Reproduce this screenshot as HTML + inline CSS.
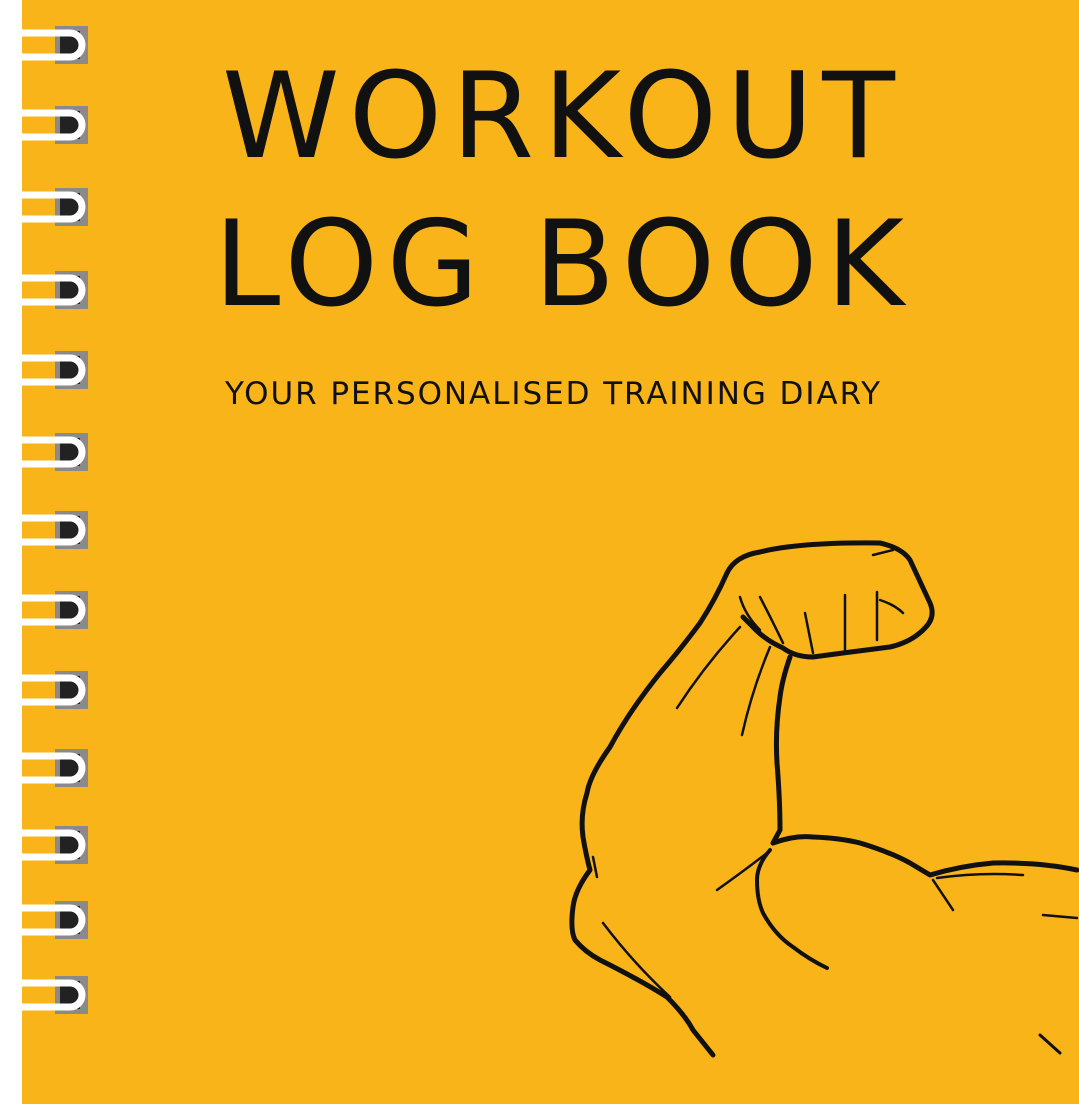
<!DOCTYPE html>
<html><head><meta charset="utf-8"><style>
html,body{margin:0;padding:0;background:#fff;width:1079px;height:1104px;overflow:hidden}
svg{display:block}
</style></head><body>
<svg width="1079" height="1104" viewBox="0 0 1079 1104" xmlns="http://www.w3.org/2000/svg">
<rect x="0" y="0" width="1079" height="1104" fill="#fff"/>
<rect x="22" y="0" width="1057" height="1104" fill="#F9B41A"/>
<g font-family="DejaVu Sans, Liberation Sans, sans-serif" fill="#111">
<text x="222" y="157" font-size="119" textLength="673" lengthAdjust="spacing">WORKOUT</text>
<text x="214" y="305" font-size="119" textLength="690" lengthAdjust="spacing">LOG BOOK</text>
<text x="225" y="404" font-size="31" textLength="655" lengthAdjust="spacing">YOUR PERSONALISED TRAINING DIARY</text>
</g>
<g id="rings">
<g transform="translate(0,45)">
<rect x="55" y="-19" width="33" height="38" fill="#8a8a8a"/>
<rect x="60" y="-14" width="20" height="28" fill="#222"/>
<path d="M0,-12 L70,-12 A12,12 0 0 1 70,12 L0,12" fill="none" stroke="#fff" stroke-width="7"/>
</g>
</g>
<use href="#rings" y="80"/>
<use href="#rings" y="162"/>
<use href="#rings" y="245"/>
<use href="#rings" y="325"/>
<use href="#rings" y="407"/>
<use href="#rings" y="485"/>
<use href="#rings" y="565"/>
<use href="#rings" y="645"/>
<use href="#rings" y="723"/>
<use href="#rings" y="800"/>
<use href="#rings" y="875"/>
<use href="#rings" y="950"/>
<g fill="none" stroke="#111" stroke-linecap="round" stroke-linejoin="round">
<path stroke-width="5" d="M727,573 Q735,556 760,552 Q800,542 880,543 Q902,548 910,560 L930,603 Q936,617 925,628 Q912,642 890,647 L843,653 L813,657 Q795,657 783,648 Q765,640 753,627 L743,617"/>
<path stroke-width="5" d="M727,573 Q715,600 700,623 Q680,650 660,673 Q630,710 610,747 Q590,775 587,793 Q580,815 583,837 Q586,855 590,870 Q575,890 573,907 Q570,930 575,940 Q585,952 600,960 Q640,980 667,997 Q685,1015 693,1030 Q705,1045 713,1055"/>
<path stroke-width="5" d="M790,657 Q782,680 780,697 Q775,730 777,763 Q780,800 780,830 L773,843"/>
<path stroke-width="5" d="M773,843 Q795,835 813,837 Q840,838 860,843 Q890,852 910,863 L930,875 Q960,866 993,863 Q1040,862 1077,870"/>
<path stroke-width="4" d="M770,850 Q757,865 757,880 Q757,900 763,913 Q775,935 793,947 Q810,960 827,968"/>
<path stroke-width="2.5" d="M717,890 Q745,870 767,853"/>
<path stroke-width="2.5" d="M933,880 L953,910"/>
<path stroke-width="2.5" d="M937,878 Q980,872 1023,875"/>
<path stroke-width="2.5" d="M1043,915 L1077,918"/>
<path stroke-width="3" d="M1040,1035 L1060,1053"/>
<path stroke-width="2.5" d="M677,708 Q705,665 740,627"/>
<path stroke-width="2.5" d="M742,735 Q752,690 770,647"/>
<path stroke-width="2.5" d="M593,857 L597,877"/>
<path stroke-width="2.5" d="M603,923 Q635,965 670,997"/>
<path stroke-width="2.5" d="M740,597 Q745,615 760,630"/>
<path stroke-width="2.5" d="M760,597 Q772,620 783,643"/>
<path stroke-width="2.5" d="M805,613 L813,653"/>
<path stroke-width="2.5" d="M845,595 L845,652"/>
<path stroke-width="2.5" d="M877,592 L877,640"/>
<path stroke-width="2.5" d="M880,600 Q895,605 903,613"/>
<path stroke-width="2.5" d="M873,555 L893,550"/>
</g>
</svg>
</body></html>
